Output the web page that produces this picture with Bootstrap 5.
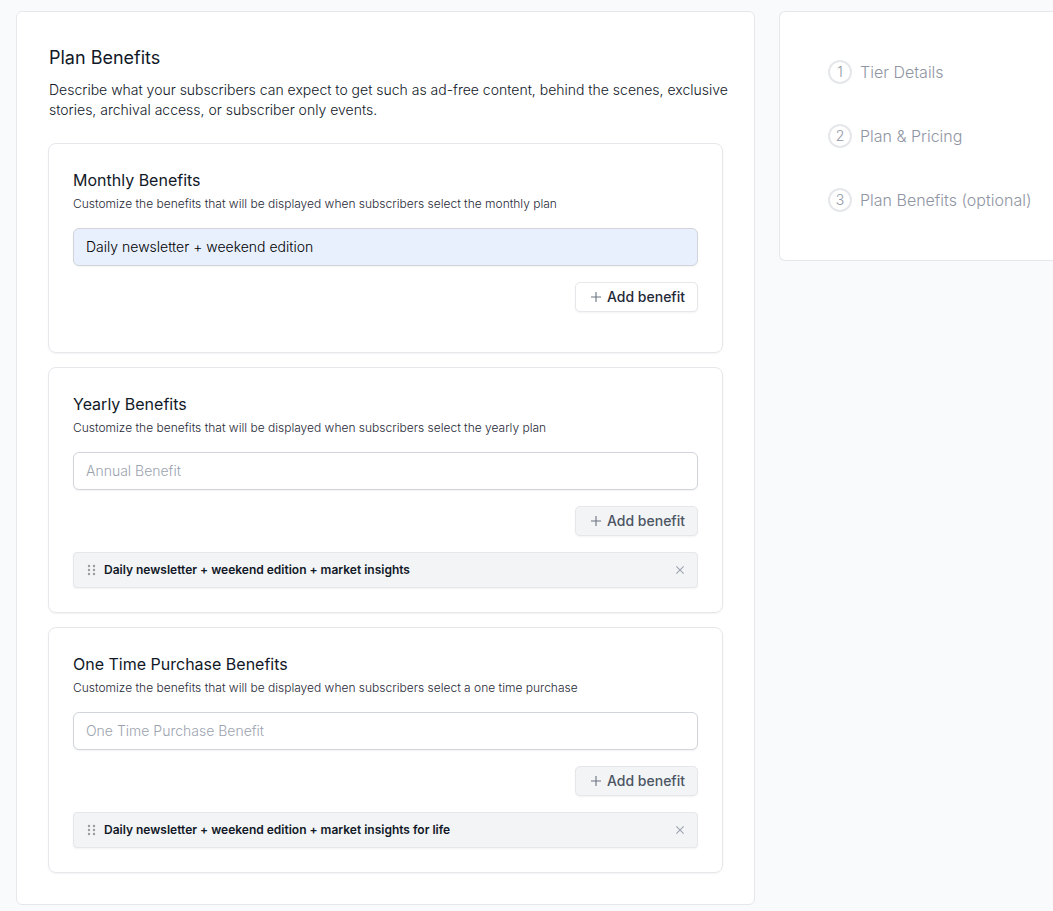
<!DOCTYPE html>
<html lang="en">
<head>
<meta charset="utf-8">
<meta name="viewport" content="width=device-width, initial-scale=1">
<title>Plan Benefits</title>
<link rel="stylesheet" href="https://cdn.jsdelivr.net/npm/bootstrap@5.3.0/dist/css/bootstrap.min.css">
<style>
  body { font-family: Inter, "Liberation Sans", sans-serif; font-size: 14px; line-height: 20px; font-weight: 300; color: #111827; background: #f9fafb; }
  .tier-layout { display: grid; grid-template-columns: minmax(0, 1fr) 274px; gap: 24px; align-items: start; padding: 11px 0 6px 16px; }
  .panel { background: #fff; border: 1px solid #e5e7eb; border-radius: 6px; }
  .panel-main { padding: 31px; }
  .panel-steps { padding: 48px 0 48px 48px; border-right: 0; border-radius: 6px 0 0 6px; }
  .panel-head { margin-right: -16px; padding: 1px 0 23px 1px; }
  .panel-title { font-size: 18px; line-height: 28px; font-weight: 400; }
  .panel-text { color: #111827; }
  .benefit-card { border: 1px solid #e5e7eb; border-radius: 8px; box-shadow: 0 1px 2px rgba(0,0,0,.05); padding: 24px; }
  .benefit-stack { gap: 14px; }
  .benefit-title { font-size: 16px; line-height: 24px; font-weight: 400; }
  .benefit-text { font-size: 12px; line-height: 16px; color: #1f2937; }
  .benefit-input { height: 38px; padding: 7px 12px 9px; font-size: 14px; line-height: 20px; font-weight: 350; border-color: #d1d5db; border-radius: 6px; box-shadow: 0 1px 2px rgba(0,0,0,.05); color: #000; }
  .benefit-input::placeholder { color: #9ca3af; font-weight: 300; }
  .benefit-input.is-filled { background: #e8f0fe; }
  .btn-add { height: 30px; padding: 0 12px; font-size: 14px; line-height: 20px; font-weight: 450; border-radius: 5px; box-shadow: 0 1px 2px rgba(0,0,0,.05);
    --bs-btn-color: #1f2937; --bs-btn-border-color: #e5e7eb; --bs-btn-bg: #fff; --bs-btn-hover-bg: #f9fafb; --bs-btn-hover-border-color: #d1d5db;
    --bs-btn-disabled-color: #4b5563; --bs-btn-disabled-bg: #f3f4f6; --bs-btn-disabled-border-color: #e5e7eb; --bs-btn-disabled-opacity: 1; }
  .btn-add { gap: 3px; }
  .benefit-item { height: 36px; padding: 0 11px; gap: 7px; background: #f3f4f6; border: 1px solid #e5e7eb; border-radius: 4px; box-shadow: 0 1px 2px rgba(0,0,0,.05); font-size: 12px; line-height: 16px; font-weight: 600; }
  .btn-icon { display: flex; padding: 0; border: 0; background: none; }
  .step-list { gap: 40px; }
  .step-link { font-size: 16px; line-height: 24px; color: #9095a3; }
  .step-num { width: 24px; height: 24px; border: 2px solid #e5e7eb; font-size: 14px; line-height: 20px; }
  @media (max-width: 767px) {
    .tier-layout { grid-template-columns: minmax(0, 1fr); padding-right: 16px; }
    .panel-steps { border-right: 1px solid #e5e7eb; border-radius: 6px; }
  }
</style>
</head>
<body>
<svg class="d-none" aria-hidden="true">
  <symbol id="i-plus" viewBox="0 0 12 12"><path d="M6 1v10M1 6h10" fill="none" stroke="#6b7280" stroke-width="1.1"/></symbol>
  <symbol id="i-close" viewBox="0 0 12 12"><path d="M2.3 2.3l7.4 7.4M9.7 2.3l-7.4 7.4" fill="none" stroke="#9ca3af" stroke-width="1.1"/></symbol>
  <symbol id="i-grip" viewBox="0 0 12 12"><g fill="#9a9a9f"><circle cx="4" cy="2" r="1.2"/><circle cx="9" cy="2" r="1.2"/><circle cx="4" cy="6" r="1.2"/><circle cx="9" cy="6" r="1.2"/><circle cx="4" cy="10" r="1.2"/><circle cx="9" cy="10" r="1.2"/></g></symbol>
</svg>

<div class="tier-layout">
  <main class="panel panel-main">
    <header class="panel-head">
      <h1 class="panel-title mb-2">Plan Benefits</h1>
      <p class="panel-text mb-0">Describe what your subscribers can expect to get such as ad-free content, behind the scenes, exclusive stories, archival access, or subscriber only events.</p>
    </header>

    <div class="benefit-stack d-flex flex-column">
      <section class="benefit-card">
        <h2 class="benefit-title mb-1"><label for="monthly">Monthly Benefits</label></h2>
        <p class="benefit-text mb-3">Customize the benefits that will be displayed when subscribers select the monthly plan</p>
        <input class="form-control benefit-input is-filled mb-3" type="text" id="monthly" placeholder="Monthly Benefit" value="Daily newsletter + weekend edition">
        <div class="d-flex justify-content-end mb-3">
          <button type="button" class="btn btn-add d-flex align-items-center"><svg width="16" height="12" aria-hidden="true"><use href="#i-plus"/></svg>Add benefit</button>
        </div>
      </section>

      <section class="benefit-card">
        <h2 class="benefit-title mb-1"><label for="yearly">Yearly Benefits</label></h2>
        <p class="benefit-text mb-3">Customize the benefits that will be displayed when subscribers select the yearly plan</p>
        <input class="form-control benefit-input mb-3" type="text" id="yearly" placeholder="Annual Benefit">
        <div class="d-flex justify-content-end mb-3">
          <button type="button" class="btn btn-add d-flex align-items-center" disabled><svg width="16" height="12" aria-hidden="true"><use href="#i-plus"/></svg>Add benefit</button>
        </div>
        <div class="benefit-item d-flex align-items-center">
          <svg width="12" height="12" aria-hidden="true"><use href="#i-grip"/></svg>
          <span>Daily newsletter + weekend edition + market insights</span>
          <button type="button" class="btn-icon ms-auto" aria-label="Remove benefit"><svg width="12" height="12" aria-hidden="true"><use href="#i-close"/></svg></button>
        </div>
      </section>

      <section class="benefit-card">
        <h2 class="benefit-title mb-1"><label for="onetime">One Time Purchase Benefits</label></h2>
        <p class="benefit-text mb-3">Customize the benefits that will be displayed when subscribers select a one time purchase</p>
        <input class="form-control benefit-input mb-3" type="text" id="onetime" placeholder="One Time Purchase Benefit">
        <div class="d-flex justify-content-end mb-3">
          <button type="button" class="btn btn-add d-flex align-items-center" disabled><svg width="16" height="12" aria-hidden="true"><use href="#i-plus"/></svg>Add benefit</button>
        </div>
        <div class="benefit-item d-flex align-items-center">
          <svg width="12" height="12" aria-hidden="true"><use href="#i-grip"/></svg>
          <span>Daily newsletter + weekend edition + market insights for life</span>
          <button type="button" class="btn-icon ms-auto" aria-label="Remove benefit"><svg width="12" height="12" aria-hidden="true"><use href="#i-close"/></svg></button>
        </div>
      </section>
    </div>
  </main>

  <nav class="panel panel-steps" aria-label="Steps">
    <ol class="step-list list-unstyled d-flex flex-column mb-0">
      <li><a href="#" class="step-link d-flex align-items-center gap-2 text-decoration-none"><span class="step-num d-flex align-items-center justify-content-center rounded-circle">1</span>Tier Details</a></li>
      <li><a href="#" class="step-link d-flex align-items-center gap-2 text-decoration-none"><span class="step-num d-flex align-items-center justify-content-center rounded-circle">2</span>Plan &amp; Pricing</a></li>
      <li><a href="#" class="step-link d-flex align-items-center gap-2 text-decoration-none"><span class="step-num d-flex align-items-center justify-content-center rounded-circle">3</span>Plan Benefits (optional)</a></li>
    </ol>
  </nav>
</div>
<script src="https://cdn.jsdelivr.net/npm/bootstrap@5.3.0/dist/js/bootstrap.bundle.min.js"></script>
</body>
</html>
